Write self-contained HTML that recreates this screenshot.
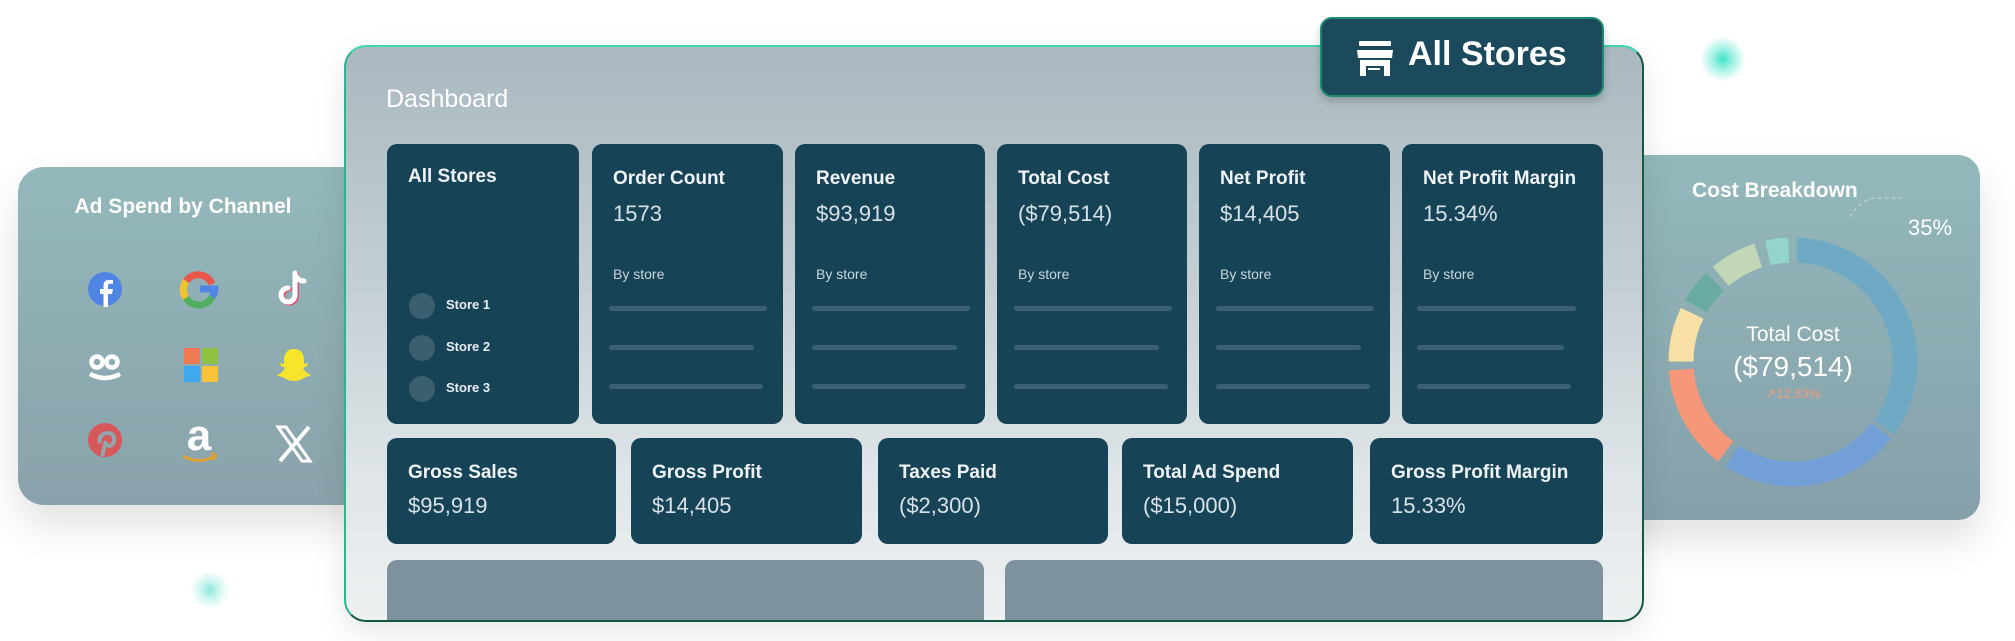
<!DOCTYPE html>
<html><head><meta charset="utf-8"><style>
*{margin:0;padding:0;box-sizing:border-box}
body{width:2015px;height:641px;background:#fff;position:relative;overflow:hidden;font-family:"Liberation Sans",sans-serif;color:#fff}
.abs{position:absolute}
.left{left:18px;top:167px;width:360px;height:338px;border-radius:26px;background:linear-gradient(#93b8bb,#8aa2ab);box-shadow:0 20px 40px rgba(0,0,0,.12)}
.left h3{position:absolute;left:50px;top:28px;width:230px;text-align:center;font-size:21px;font-weight:bold}
.right{left:1600px;top:155px;width:380px;height:365px;border-radius:22px;background:linear-gradient(#93b8bb,#86a0aa);box-shadow:0 20px 40px rgba(0,0,0,.12)}
.main{left:344px;top:45px;width:1300px;height:577px;border-radius:22px;border:2px solid #135a45;border-top-color:#3fd6b0;border-left-color:#2bb58e;background:linear-gradient(180deg,#a9b9bf 0%,#c3ced3 40%,#dfe5e8 75%,#eef1f2 100%);overflow:hidden;box-shadow:0 10px 30px rgba(0,0,0,.1)}
.card{position:absolute;background:#174357;border-radius:10px}
.card .t{position:absolute;left:21px;top:24px;font-size:19px;font-weight:bold;color:#eef3f5;white-space:nowrap}
.card .v{position:absolute;left:21px;top:57px;font-size:22px;color:#d8e2e6;font-weight:normal}
.card .b{position:absolute;left:21px;top:122px;font-size:14px;color:#c9d6db}
.bar{position:absolute;height:5px;border-radius:3px;background:#3a6073}
.c2 .t{top:24px}.c2 .v{top:55px}
.g{position:absolute;background:#7d929c;border-radius:10px}
.dot{position:absolute;width:26px;height:26px;border-radius:50%;background:#3a5f70}
.sl{position:absolute;font-size:13px;font-weight:bold;color:#e8eef1}
</style></head><body>
<div class="abs" style="left:1700px;top:36px;width:46px;height:46px;border-radius:50%;background:radial-gradient(#3de3c8 0%,rgba(61,227,200,.5) 30%,rgba(61,227,200,0) 70%)"></div>
<div class="abs" style="left:190px;top:570px;width:40px;height:40px;border-radius:50%;background:radial-gradient(#8fe9dc 0%,rgba(143,233,220,.4) 35%,rgba(143,233,220,0) 70%)"></div>

<div class="abs left"><h3>Ad Spend by Channel</h3>
<svg class="abs" style="left:0;top:0" width="360" height="338">
 <g transform="translate(69,104)"><circle cx="18" cy="18" r="17" fill="#4f86e6"/><path d="M21 36V23h4l1-5h-5v-3c0-1.5.6-2.2 2.2-2.2H26V9h-4c-4 0-5.5 2.4-5.5 5.8V18h-3.5v5h3.5v13z" fill="#fff"/></g>
 <g transform="translate(163,104)" fill="none" stroke-width="7"><path d="M31 13 A15 15 0 0 0 5 10" stroke="#e8574a"/><path d="M5 10 A15 15 0 0 0 5 27" stroke="#f2c22e"/><path d="M5 27 A15 15 0 0 0 31 26" stroke="#4faf5e"/><path d="M31 26 Q34 22 34 18 H19" stroke="#4f86e6"/></g>
 <g transform="translate(257,102)" fill="none" stroke-linecap="round"><path d="M20 4v22a7 7 0 1 1-7-7" stroke="#e0516f" stroke-width="5" transform="translate(1.5,1)"/><path d="M20 4v22a7 7 0 1 1-7-7M20 4c1 5 4 8 9 8" stroke="#fff" stroke-width="5"/></g>
 <g transform="translate(69,185)" fill="none" stroke="#fff" stroke-width="4.5"><circle cx="10" cy="10" r="5.5"/><circle cx="25" cy="10" r="5.5"/><path d="M3 22q15 8 30 0"/></g>
 <g transform="translate(166,181)"><rect width="16" height="16" fill="#f27a52"/><rect x="18" width="16" height="16" fill="#8ec240"/><rect y="18" width="16" height="16" fill="#3fa8ee"/><rect x="18" y="18" width="16" height="16" fill="#fbc33a"/></g>
 <g transform="translate(258,180)"><path d="M18 2c7 0 10 5 10 11v4l4-1-1 3-4 2c2 4 5 6 8 7-2 2-5 1-7 3-2 1-5 3-10 3s-8-2-10-3c-2-2-5-1-7-3 3-1 6-3 8-7l-4-2-1-3 4 1v-4C8 7 11 2 18 2z" fill="#f6e52a"/></g>
 <g transform="translate(69,255)"><circle cx="18" cy="18" r="17" fill="#d6585a"/><path d="M15 34l4-15M13 21c-2-6 3-10 8-10 4 0 7 3 6 8-1 4-4 6-7 4" fill="none" stroke="#8fa8ae" stroke-width="4"/></g>
 <text x="181" y="283" text-anchor="middle" font-family="Liberation Sans" font-size="44" font-weight="bold" fill="#fff">a</text>
 <path d="M165 289q16 9 32 0" stroke="#e0a133" stroke-width="3" fill="none"/><path d="M193 286l5 3-3 4" stroke="#e0a133" stroke-width="2.5" fill="none"/>
 <g transform="translate(258,258)" stroke="#fff" fill="none"><path d="M2 2h8l24 34h-8z" stroke-width="3"/><path d="M33 2L4 36" stroke-width="4"/></g>
</svg></div>

<div class="abs right">
 <div class="abs" style="left:92px;top:24px;font-size:21px;font-weight:bold">Cost Breakdown</div>
 <div class="abs" style="left:308px;top:60px;font-size:22px">35%</div>
 <svg class="abs" style="left:0;top:0" width="380" height="365">
  <path d="M250 62 Q260 45 275 43 H305" stroke="#b9d0d0" stroke-dasharray="4 3" fill="none" stroke-width="1.5"/>
  <g transform="translate(193,207) rotate(-90)" fill="none" stroke-width="25">
   <circle r="112" stroke="#6fa9c4" stroke-dasharray="241.4 704" stroke-dashoffset="-3.9"/>
   <circle r="112" stroke="#719fd6" stroke-dasharray="166 704" stroke-dashoffset="-250"/>
   <circle r="112" stroke="#f7977a" stroke-dasharray="96 704" stroke-dashoffset="-424"/>
   <circle r="112" stroke="#f8dfa6" stroke-dasharray="50 704" stroke-dashoffset="-528"/>
   <circle r="112" stroke="#69aba0" stroke-dasharray="31 704" stroke-dashoffset="-586"/>
   <circle r="112" stroke="#c2d7b6" stroke-dasharray="43 704" stroke-dashoffset="-625"/>
   <circle r="112" stroke="#93d4cd" stroke-dasharray="21 704" stroke-dashoffset="-678"/>
  </g>
  <text x="193" y="186" text-anchor="middle" font-size="21" fill="#fff" font-family="Liberation Sans">Total Cost</text>
  <text x="193" y="221" text-anchor="middle" font-size="28" fill="#fff" font-family="Liberation Sans">($79,514)</text>
  <text x="193" y="243" text-anchor="middle" font-size="13" fill="#f19b80" font-family="Liberation Sans">↗12.83%</text>
 </svg>
</div>

<div class="abs main">
 <div class="abs" style="left:40px;top:38px;font-size:25px;color:#fff">Dashboard</div>
 <div class="card" style="left:41px;top:97px;width:192px;height:280px">
  <div class="t" style="top:22px">All Stores</div>
  <div class="dot" style="left:22px;top:149px"></div><div class="sl" style="left:59px;top:153px">Store 1</div>
  <div class="dot" style="left:22px;top:191px"></div><div class="sl" style="left:59px;top:195px">Store 2</div>
  <div class="dot" style="left:22px;top:232px"></div><div class="sl" style="left:59px;top:236px">Store 3</div>
 </div>
 <div class="card" style="left:246px;top:97px;width:191px;height:280px"><div class="t">Order Count</div><div class="v">1573</div><div class="b">By store</div><div class="bar" style="left:17px;top:162px;width:158px"></div><div class="bar" style="left:17px;top:201px;width:145px"></div><div class="bar" style="left:17px;top:240px;width:154px"></div></div>
 <div class="card" style="left:449px;top:97px;width:190px;height:280px"><div class="t">Revenue</div><div class="v">$93,919</div><div class="b">By store</div><div class="bar" style="left:17px;top:162px;width:158px"></div><div class="bar" style="left:17px;top:201px;width:145px"></div><div class="bar" style="left:17px;top:240px;width:154px"></div></div>
 <div class="card" style="left:651px;top:97px;width:190px;height:280px"><div class="t">Total Cost</div><div class="v">($79,514)</div><div class="b">By store</div><div class="bar" style="left:17px;top:162px;width:158px"></div><div class="bar" style="left:17px;top:201px;width:145px"></div><div class="bar" style="left:17px;top:240px;width:154px"></div></div>
 <div class="card" style="left:853px;top:97px;width:191px;height:280px"><div class="t">Net Profit</div><div class="v">$14,405</div><div class="b">By store</div><div class="bar" style="left:17px;top:162px;width:158px"></div><div class="bar" style="left:17px;top:201px;width:145px"></div><div class="bar" style="left:17px;top:240px;width:154px"></div></div>
 <div class="card" style="left:1056px;top:97px;width:201px;height:280px"><div class="t">Net Profit Margin</div><div class="v">15.34%</div><div class="b">By store</div><div class="bar" style="left:15px;top:162px;width:159px"></div><div class="bar" style="left:15px;top:201px;width:147px"></div><div class="bar" style="left:15px;top:240px;width:154px"></div></div>
 <div class="card c2" style="left:41px;top:391px;width:229px;height:106px"><div class="t">Gross Sales</div><div class="v">$95,919</div></div>
 <div class="card c2" style="left:285px;top:391px;width:231px;height:106px"><div class="t">Gross Profit</div><div class="v">$14,405</div></div>
 <div class="card c2" style="left:532px;top:391px;width:230px;height:106px"><div class="t">Taxes Paid</div><div class="v">($2,300)</div></div>
 <div class="card c2" style="left:776px;top:391px;width:231px;height:106px"><div class="t">Total Ad Spend</div><div class="v">($15,000)</div></div>
 <div class="card c2" style="left:1024px;top:391px;width:233px;height:106px"><div class="t">Gross Profit Margin</div><div class="v">15.33%</div></div>
 <div class="g" style="left:41px;top:513px;width:597px;height:80px"></div>
 <div class="g" style="left:659px;top:513px;width:598px;height:80px"></div>
</div>

<div class="abs" style="left:1320px;top:17px;width:284px;height:80px;border-radius:12px;background:#1b4a5c;border:2px solid #1f8a6e;box-shadow:0 4px 8px rgba(0,0,0,.2)">
 <svg class="abs" style="left:34px;top:22px" width="38" height="36" viewBox="0 0 38 36" fill="#fff"><rect x="3" y="0" width="32" height="5" rx="1"/><path d="M1 9h36l-1 8H2z"/><path d="M4 19h30v16h-6v-10H10v10H4z"/><rect x="12" y="27" width="12" height="2"/></svg>
 <div class="abs" style="left:86px;top:16px;font-size:34px;font-weight:bold">All Stores</div>
</div>
</body></html>
